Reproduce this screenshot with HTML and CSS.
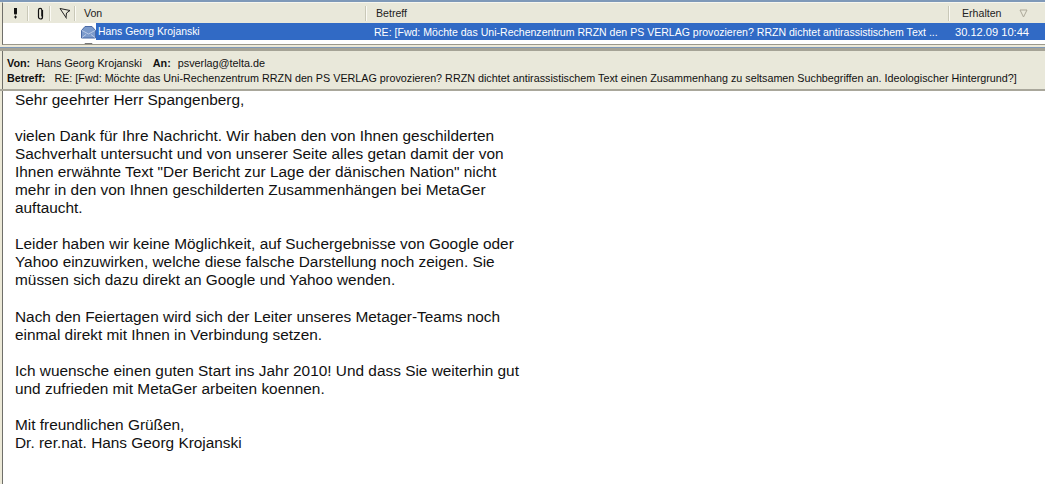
FILE: index.html
```html
<!DOCTYPE html>
<html lang="de">
<head>
<meta charset="utf-8">
<title>Nachricht</title>
<link rel="stylesheet" href="styles.css">
</head>
<body>
<div class="app">
<div class="list-pane">
  <div class="cols head">
    <div class="h h-icon"><svg width="9" height="12" viewBox="0 0 9 12"><path d="M3 1h3v5.500L5.500 7.500h-2L3 6.500zM4 8.500h1v1H4zM3 9.500h3v1H3zM4 10.500h1v1H4z" fill="#111"/></svg></div>
    <div class="h h-icon h-clip"><svg width="9" height="13" viewBox="0 0 9 13"><path d="M6.500 3v7a2 2 0 0 1-4 0V3a1.600 1.600 0 0 1 3.300 0v6.500" fill="none" stroke="#111" stroke-width="1.200"/></svg></div>
    <div class="h h-icon h-flag"><svg width="12" height="12" viewBox="0 0 12 12"><path d="M1 1.500L11 3.500 7.500 6 7 10.500zM7 10.500L7.500 11.500" fill="none" stroke="#222"/></svg></div>
    <div class="h h-von">Von</div>
    <div class="h h-subject">Betreff</div>
    <div class="h h-date">Erhalten<svg class="sort" width="9" height="9" viewBox="0 0 9 9"><path d="M1 1h7L4.500 8z" fill="none" stroke="#aca899"/></svg></div>
  </div>
  <div class="rows">
    <div class="cols row selected">
      <div class="flags"><svg width="15" height="14" viewBox="0 0 15 14"><path d="M.5 5.500L4 1.500h7l3.500 4v7.500H.5z" fill="#7b9acb" stroke="#4a6aa5"/><path d="M1 5.500l6.500 3.500 6.500-3.500M1 12.500l4-3M14 12.500l-4-3" fill="none" stroke="#b9c9e6"/></svg></div>
      <div class="c-von">Hans Georg Krojanski</div>
      <div class="c-subject">RE: [Fwd: Möchte das Uni-Rechenzentrum RRZN den PS VERLAG provozieren? RRZN dichtet antirassistischem Text ...</div>
      <div class="c-date">30.12.09 10:44</div>
    </div>
    <div class="cols row">
      <div class="flags"><svg width="15" height="14" viewBox="0 0 15 14"><path d="M.5 5.500L4 1.500h7l3.500 4v7.500H.5z" fill="#e4e4e4" stroke="#777"/></svg></div>
      <div class="c-von">Hans Georg Krojanski</div>
      <div class="c-subject">RE: [Fwd: Möchte das Uni-Rechenzentrum RRZN den PS VERLAG</div>
      <div class="c-date"></div>
    </div>
  </div>
</div>
<div class="message-pane">
  <div class="meta">
    <div class="meta-line"><b>Von:</b><span class="v1">Hans Georg Krojanski</span><b>An:</b><span class="v2">psverlag@telta.de</span></div>
    <div class="meta-line"><b>Betreff:</b><span class="v3">RE: [Fwd: Möchte das Uni-Rechenzentrum RRZN den PS VERLAG provozieren? RRZN dichtet antirassistischem Text einen Zusammenhang zu seltsamen Suchbegriffen an. Ideologischer Hintergrund?]</span></div>
  </div>
  <div class="body-text">
    <p>Sehr geehrter Herr Spangenberg,</p>
    <p>vielen Dank für Ihre Nachricht. Wir haben den von Ihnen geschilderten<br>Sachverhalt untersucht und von unserer Seite alles getan damit der von<br>Ihnen erwähnte Text "Der Bericht zur Lage der dänischen Nation" nicht<br>mehr in den von Ihnen geschilderten Zusammenhängen bei MetaGer<br>auftaucht.</p>
    <p>Leider haben wir keine Möglichkeit, auf Suchergebnisse von Google oder<br>Yahoo einzuwirken, welche diese falsche Darstellung noch zeigen. Sie<br>müssen sich dazu direkt an Google und Yahoo wenden.</p>
    <p>Nach den Feiertagen wird sich der Leiter unseres Metager-Teams noch<br>einmal direkt mit Ihnen in Verbindung setzen.</p>
    <p>Ich wuensche einen guten Start ins Jahr 2010! Und dass Sie weiterhin gut<br>und zufrieden mit MetaGer arbeiten koennen.</p>
    <p>Mit freundlichen Grüßen,<br>Dr. rer.nat. Hans Georg Krojanski</p>
  </div>
</div>
</div>
</body>
</html>
```
FILE: styles.css
```css
html, body {
  margin: 0;
  padding: 0;
  height: 484px;
  overflow: hidden;
  background: #fff;
  font-family: "Liberation Sans", Arial, sans-serif;
}
.app {
  height: 484px;
  box-sizing: border-box;
  border-top: 2px solid #7f99b8;
  background: #ece9d8;
  display: flex;
  flex-direction: column;
}
.list-pane {
  height: 41px;
  margin-left: 2px;
  border-top: 1px solid #f7f6ee;
  border-left: 1px solid #6f6f6a;
  border-bottom: 1px solid #9a988c;
  background: #fff;
  overflow: hidden;
  flex: none;
}
.cols {
  display: flex;
  align-items: center;
}
.head {
  height: 20px;
  background: #e9e8da;
  font-size: 10.6px;
  color: #222;
}
.h {
  height: 15px;
  display: flex;
  align-items: center;
  border-right: 1px solid #c9c8b8;
  box-shadow: 1px 0 0 #fbfaf4;
  box-sizing: border-box;
}
.h-icon { width: 25px; justify-content: center; }
.h-clip { width: 22px; padding-left: 3px; }
.h-flag { width: 25px; padding-left: 5px; }
.h-von { width: 291px; padding-left: 9px; }
.h-subject { width: 583px; padding-left: 10px; }
.h-date { flex: 1; padding-left: 13px; border-right: 0; box-shadow: none; }
.sort { margin-left: 18px; }
.rows { height: 21px; overflow: hidden; }
.row {
  height: 17px;
  font-size: 11px;
  color: #111;
  white-space: nowrap;
}
.flags {
  width: 93px;
  flex: none;
  display: flex;
  justify-content: flex-end;
  align-items: center;
  background: #fff;
  box-sizing: border-box;
  height: 17px;
}
.c-von { width: 278px; flex: none; padding-left: 2px; box-sizing: border-box; font-size: 10.4px; }
.c-subject { width: 581px; flex: none; overflow: hidden; font-size: 10.55px; }
.c-date { flex: 1; font-size: 11.1px; }
.selected { background: #316ac5; color: #fff; }
.message-pane {
  flex: 1;
  margin-top: 2px;
  border-top: 1px solid #7f99b8;
  display: flex;
  flex-direction: column;
}
.meta {
  flex: none;
  background: #e9e8da;
  border-top: 3px solid #a5a396;
  border-bottom: 2px solid #a9a79b;
  padding: 5px 0 0 7px;
  height: 43px;
  box-sizing: border-box;
  font-size: 10.8px;
  color: #111;
  white-space: nowrap;
  box-shadow: inset 2px 0 0 #ece9d8, inset 3px 0 0 #6f6f6a;
}
.meta-line { height: 15px; line-height: 15px; }
.v1 { margin: 0 11px 0 6px; }
.v2 { margin-left: 7px; }
.v3 { margin-left: 9px; font-size: 10.77px; }
.body-text {
  flex: 1;
  margin-left: 2px;
  border-left: 1px solid #6f6f6a;
  background: #fff;
  padding: 0 0 0 12px;
  font-size: 15.4px;
  line-height: 18.05px;
  color: #111;
  white-space: nowrap;
}
.body-text p { margin: 0 0 18.05px; }
```
